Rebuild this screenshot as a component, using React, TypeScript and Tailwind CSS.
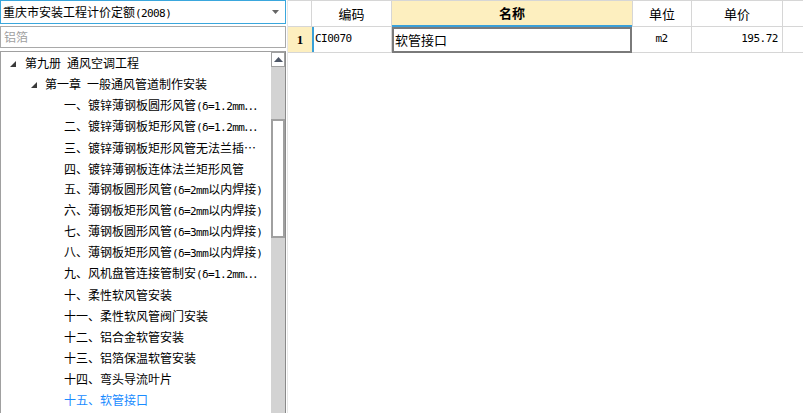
import React from "react";

type Item = { level: number; text: string; active?: boolean };

const items: Item[] = [
  { level: 0, text: "第九册 通风空调工程" },
  { level: 1, text: "第一章 一般通风管道制作安装" },
  { level: 2, text: "一、镀锌薄钢板圆形风管(δ=1.2mm…" },
  { level: 2, text: "二、镀锌薄钢板矩形风管(δ=1.2mm…" },
  { level: 2, text: "三、镀锌薄钢板矩形风管无法兰插…" },
  { level: 2, text: "四、镀锌薄钢板连体法兰矩形风管" },
  { level: 2, text: "五、薄钢板圆形风管(δ=2mm以内焊接)" },
  { level: 2, text: "六、薄钢板矩形风管(δ=2mm以内焊接)" },
  { level: 2, text: "七、薄钢板圆形风管(δ=3mm以内焊接)" },
  { level: 2, text: "八、薄钢板矩形风管(δ=3mm以内焊接)" },
  { level: 2, text: "九、风机盘管连接管制安(δ=1.2mm…" },
  { level: 2, text: "十、柔性软风管安装" },
  { level: 2, text: "十一、柔性软风管阀门安装" },
  { level: 2, text: "十二、铝合金软管安装" },
  { level: 2, text: "十三、铝箔保温软管安装" },
  { level: 2, text: "十四、弯头导流叶片" },
  { level: 2, text: "十五、软管接口", active: true },
];

function Txt({ s }: { s: string }) {
  const parts = s.match(/[\x20-\x7Eδ]+|[^\x20-\x7Eδ]+/g) || [];
  return (
    <>
      {parts.map((p, i) =>
        /^[\x20-\x7Eδ]+$/.test(p) ? (
          <span
            key={i}
            className="font-['DejaVu_Sans_Mono',monospace] text-[11px] tracking-[-0.6px] whitespace-pre"
          >
            {p}
          </span>
        ) : (
          <span key={i}>{p}</span>
        )
      )}
    </>
  );
}

const Tri = () => (
  <svg width="6" height="6" viewBox="0 0 6 6" className="shrink-0">
    <polygon points="6,0 6,6 0,6" fill="#3a3a3a" />
  </svg>
);

export default function App() {
  return (
    <div className="w-[803px] h-[413px] flex bg-white overflow-hidden font-['Noto_Sans_CJK_SC',sans-serif] text-[12px] text-black">
      {/* left panel */}
      <div className="w-[286px] h-full flex flex-col shrink-0">
        <div className="h-[24px] border border-[#3aa7dd] flex items-center pl-[2px] pr-[6px]">
          <span className="flex-1 leading-none">
            <Txt s="重庆市安装工程计价定额(2008)" />
          </span>
          <svg width="7" height="4" viewBox="0 0 7 4">
            <polygon points="0,0 7,0 3.5,4" fill="#666" />
          </svg>
        </div>
        <div className="h-[22px] mt-[2px] border border-[#a9a9a9] flex items-center pl-[3px] text-[#a0a0a0]">
          铝箔
        </div>
        <div className="flex-1 mt-[3px] border-t border-l border-[#a0a0a0] border-r-[1px] border-r-[#8a8a8a] flex min-h-0">
          <div className="flex-1 pt-[1px] min-w-0">
            {items.map((it, i) => (
              <div
                key={i}
                className={
                  "h-[21px] flex items-center whitespace-nowrap " +
                  (it.active ? "text-[#1a8cff]" : "text-black")
                }
              >
                {it.level === 0 && (
                  <div className="pl-[9px] flex items-center">
                    <Tri />
                    <span className="ml-[9px]">
                      <Txt s={it.text} />
                    </span>
                  </div>
                )}
                {it.level === 1 && (
                  <div className="pl-[30px] flex items-center">
                    <Tri />
                    <span className="ml-[8px]">
                      <Txt s={it.text} />
                    </span>
                  </div>
                )}
                {it.level === 2 && (
                  <span className="pl-[63px] block">
                    <Txt s={it.text} />
                  </span>
                )}
              </div>
            ))}
          </div>
          {/* scrollbar */}
          <div className="w-[14px] shrink-0 flex flex-col bg-[#d3d3d3]">
            <div className="h-[15px] bg-white border border-[#a0a0a0] flex items-center justify-center">
              <svg width="9" height="5" viewBox="0 0 9 5">
                <polygon points="0,5 9,5 4.5,0" fill="#4f5868" />
              </svg>
            </div>
            <div className="h-[52px]" />
            <div className="h-[119px] bg-white border-2 border-[#a0a0a0]" />
          </div>
        </div>
      </div>
      <div className="w-[1px] h-full bg-[#e6e6e6] ml-[1px]" />
      {/* right panel */}
      <div className="flex-1 h-full">
        <div className="flex h-[27px] border-t border-b border-[#d6d6d6] text-[13px]">
          <div className="w-[24px] border-r border-[#d6d6d6]" />
          <div className="w-[80px] border-r border-[#d6d6d6] flex items-center justify-center">编码</div>
          <div className="w-[240px] bg-[#fdefbf] border-b-2 border-b-[#3aa0d8] flex items-center justify-center font-bold -mb-[1px]">
            名称
          </div>
          <div className="w-[60px] border-r border-l border-[#d6d6d6] flex items-center justify-center">单位</div>
          <div className="w-[91px] border-r border-[#d6d6d6] flex items-center justify-center">单价</div>
        </div>
        <div className="flex h-[26px] border-b border-[#d6d6d6]">
          <div className="w-[24px] bg-[#fdefbf] flex items-center justify-center font-['Liberation_Serif',serif] font-bold text-[13px]">
            1
          </div>
          <div className="w-[80px] border-l-2 border-l-[#3aa0d8] border-r border-r-[#d6d6d6] flex items-center pl-[1px] font-['DejaVu_Sans_Mono',monospace] text-[11px] tracking-[-0.5px]">
            CI0070
          </div>
          <div className="w-[240px] border-2 border-[#7a7a7a] -mb-[1px] flex items-center pl-[1px] text-[13px]">
            软管接口
          </div>
          <div className="w-[60px] border-r border-[#d6d6d6] flex items-center justify-center font-['DejaVu_Sans_Mono',monospace] text-[11px] tracking-[-0.5px]">
            m2
          </div>
          <div className="w-[91px] border-r border-[#d6d6d6] flex items-center justify-end pr-[4px] font-['DejaVu_Sans_Mono',monospace] text-[11px] tracking-[-0.5px]">
            195.72
          </div>
        </div>
      </div>
    </div>
  );
}
